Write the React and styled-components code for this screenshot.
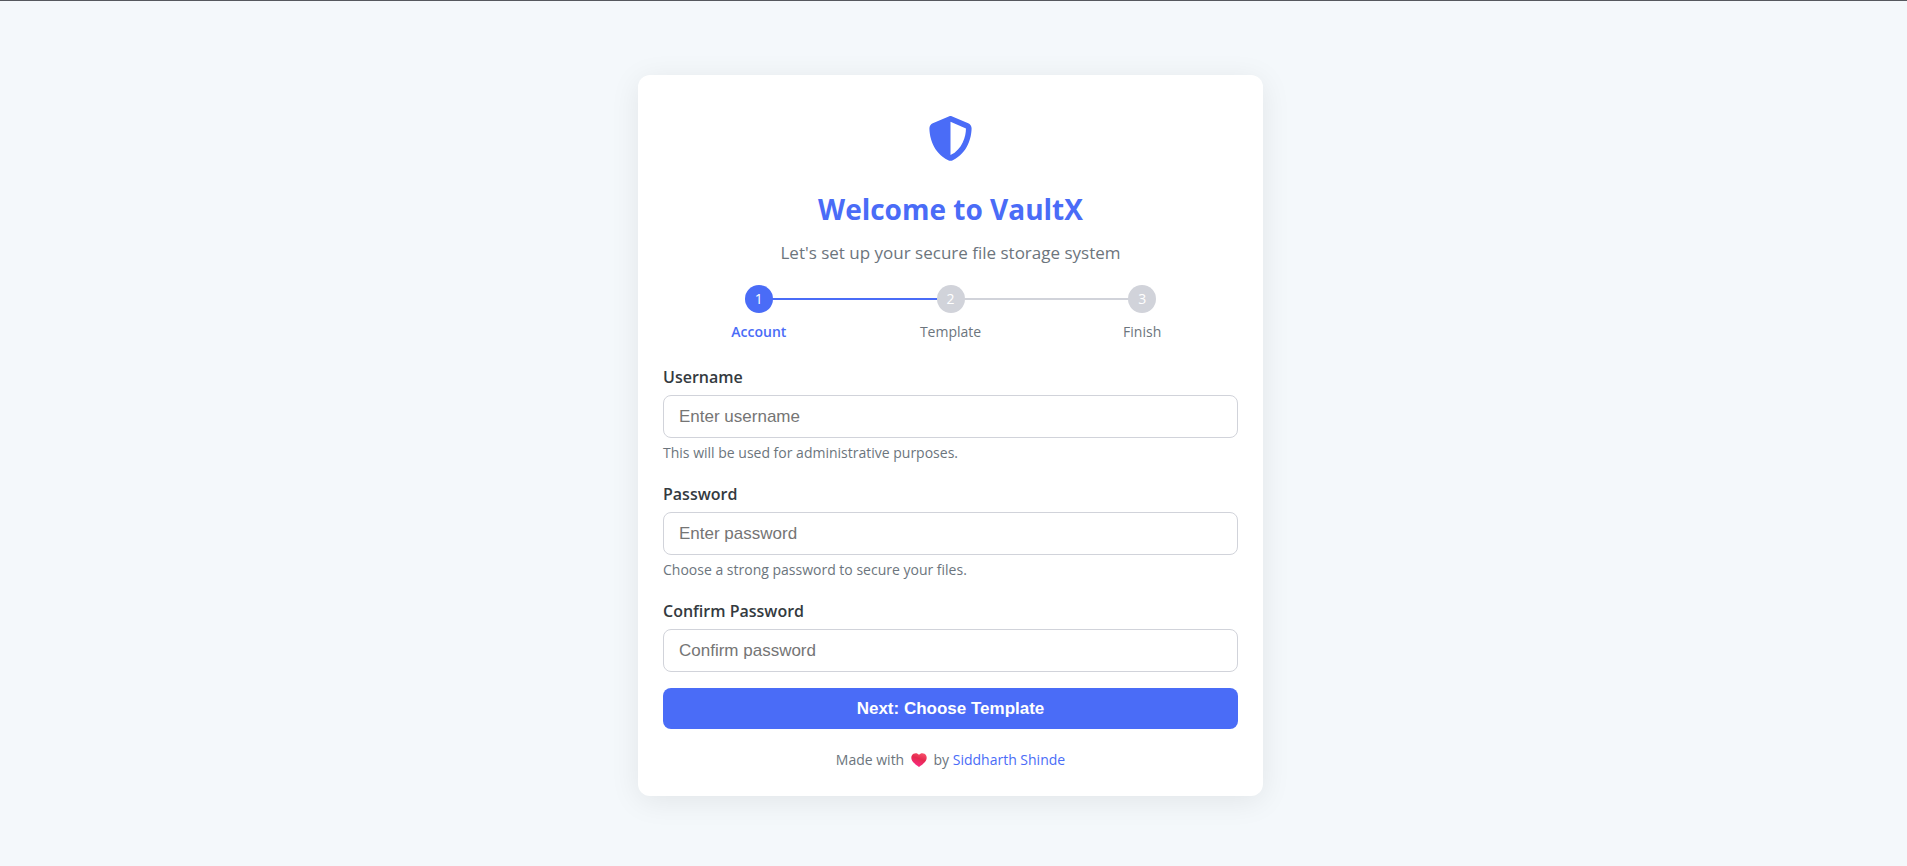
import React from "react";
import styled, { createGlobalStyle, css } from "styled-components";
import { FaShieldHalved } from "react-icons/fa6";

const GlobalStyle = createGlobalStyle`
  *, *::before, *::after { box-sizing: border-box; }
  body {
    margin: 0;
    background: #f4f8fb;
    color: #343a40;
    font-family: "Segoe UI", "Open Sans", sans-serif;
  }
`;

const Page = styled.main`
  display: flex;
  justify-content: center;
  align-items: flex-start;
  min-height: 100vh;
  padding: 74px 26px 69px 20px;
  border-top: 1px solid #55585e;
`;

const Card = styled.section`
  width: 100%;
  max-width: 625px;
  padding: 41px 25px 25px;
  border-radius: 12px;
  background: #fff;
  box-shadow: 0 5px 30px rgba(0, 0, 0, 0.08);
`;

const Header = styled.header`
  display: flex;
  flex-direction: column;
  align-items: center;
  text-align: center;
`;

const Logo = styled(FaShieldHalved)`
  width: 45px;
  height: 45px;
  color: #4a6cf7;
`;

const Title = styled.h1`
  margin: 26px 0 0;
  color: #4a6cf7;
  font-size: 28px;
  line-height: 44px;
  font-weight: 700;
`;

const Subtitle = styled.p`
  margin: 9px 0 0;
  color: #6c757d;
  font-size: 17px;
  line-height: 26px;
`;

const Steps = styled.ol`
  display: flex;
  margin: 19px 0 22px;
  padding: 0;
  list-style: none;
`;

const Step = styled.li`
  position: relative;
  display: flex;
  flex: 1;
  flex-direction: column;
  align-items: center;
  gap: 9px;

  &:not(:last-child)::after {
    content: "";
    position: absolute;
    top: 13px;
    left: 50%;
    width: 100%;
    height: 2px;
    background: ${(p) => (p.$active ? "#4a6cf7" : "#d1d3da")};
  }
`;

const StepNumber = styled.span`
  z-index: 1;
  display: grid;
  place-items: center;
  width: 28px;
  height: 28px;
  border-radius: 50%;
  background: ${(p) => (p.$active ? "#4a6cf7" : "#d1d3da")};
  color: #fff;
  font-size: 14px;
  line-height: 20px;
`;

const StepName = styled.span`
  color: #6c757d;
  font-size: 14px;
  line-height: 20px;
  ${(p) => p.$active && css`
    color: #4a6cf7;
    font-weight: 600;
  `}
`;

const Form = styled.form`
  display: flex;
  flex-direction: column;
`;

const Field = styled.div`
  display: flex;
  flex-direction: column;
  margin-bottom: ${(p) => (p.$last ? 16 : 18)}px;
`;

const Label = styled.label`
  margin-bottom: 5px;
  font-size: 16px;
  line-height: 26px;
  font-weight: 600;
`;

const Input = styled.input`
  width: 100%;
  height: 43px;
  padding: 0 15px;
  border: 1px solid #d1d3da;
  border-radius: 8px;
  background: #fff;
  font-family: "Liberation Sans", Arial, sans-serif;
  font-size: 17px;

  &::placeholder { color: #757575; opacity: 1; }
  &:focus { outline: none; border-color: #4a6cf7; }
`;

const Hint = styled.small`
  margin-top: 5px;
  color: #6c757d;
  font-size: 14px;
  line-height: 20px;
`;

const SubmitButton = styled.button`
  height: 41px;
  border: 0;
  border-radius: 8px;
  background: #4a6cf7;
  color: #fff;
  font-family: "Liberation Sans", Arial, sans-serif;
  font-size: 17px;
  font-weight: 700;
  cursor: pointer;
`;

const Footer = styled.footer`
  margin-top: 20px;
  color: #6c757d;
  font-size: 14px;
  line-height: 22px;
  text-align: center;
`;

const Heart = styled.svg`
  width: 16px;
  height: 14px;
  margin: 0 3px;
  vertical-align: -2px;
`;

const AuthorLink = styled.a`
  color: #4a6cf7;
  text-decoration: none;
`;

const steps = ["Account", "Template", "Finish"];

const fields = [
  { id: "username", type: "text", label: "Username", placeholder: "Enter username", hint: "This will be used for administrative purposes." },
  { id: "password", type: "password", label: "Password", placeholder: "Enter password", hint: "Choose a strong password to secure your files." },
  { id: "confirm", type: "password", label: "Confirm Password", placeholder: "Confirm password" },
];

export default function App() {
  return (
    <>
      <GlobalStyle />
      <Page>
        <Card>
          <Header>
            <Logo aria-hidden="true" />
            <Title>Welcome to VaultX</Title>
            <Subtitle>Let's set up your secure file storage system</Subtitle>
          </Header>
          <Steps>
            {steps.map((name, i) => (
              <Step key={name} $active={i === 0}>
                <StepNumber $active={i === 0}>{i + 1}</StepNumber>
                <StepName $active={i === 0}>{name}</StepName>
              </Step>
            ))}
          </Steps>
          <Form onSubmit={(e) => e.preventDefault()}>
            {fields.map((f, i) => (
              <Field key={f.id} $last={i === fields.length - 1}>
                <Label htmlFor={f.id}>{f.label}</Label>
                <Input id={f.id} type={f.type} placeholder={f.placeholder} />
                {f.hint && <Hint>{f.hint}</Hint>}
              </Field>
            ))}
            <SubmitButton type="submit">Next: Choose Template</SubmitButton>
          </Form>
          <Footer>
            Made with{" "}
            <Heart viewBox="0 0 16 14" role="img" aria-label="love">
              <defs>
                <linearGradient id="heart" x1="0.8" y1="0" x2="0.4" y2="1">
                  <stop offset="0" stopColor="#f9526c" />
                  <stop offset="0.45" stopColor="#e52a4f" />
                  <stop offset="1" stopColor="#fb2a86" />
                </linearGradient>
              </defs>
              <path fill="url(#heart)" d="M8 1.800C6.700 0 4.400-.3 2.500.700.5 1.900-.2 4.400.700 6.700 1.900 9.600 5 12 8 13.900c3-1.900 6.100-4.300 7.300-7.200.9-2.300.2-4.800-1.800-6C11.600-.3 9.300 0 8 1.800z" />
            </Heart>{" "}
            by <AuthorLink href="#author">Siddharth Shinde</AuthorLink>
          </Footer>
        </Card>
      </Page>
    </>
  );
}
